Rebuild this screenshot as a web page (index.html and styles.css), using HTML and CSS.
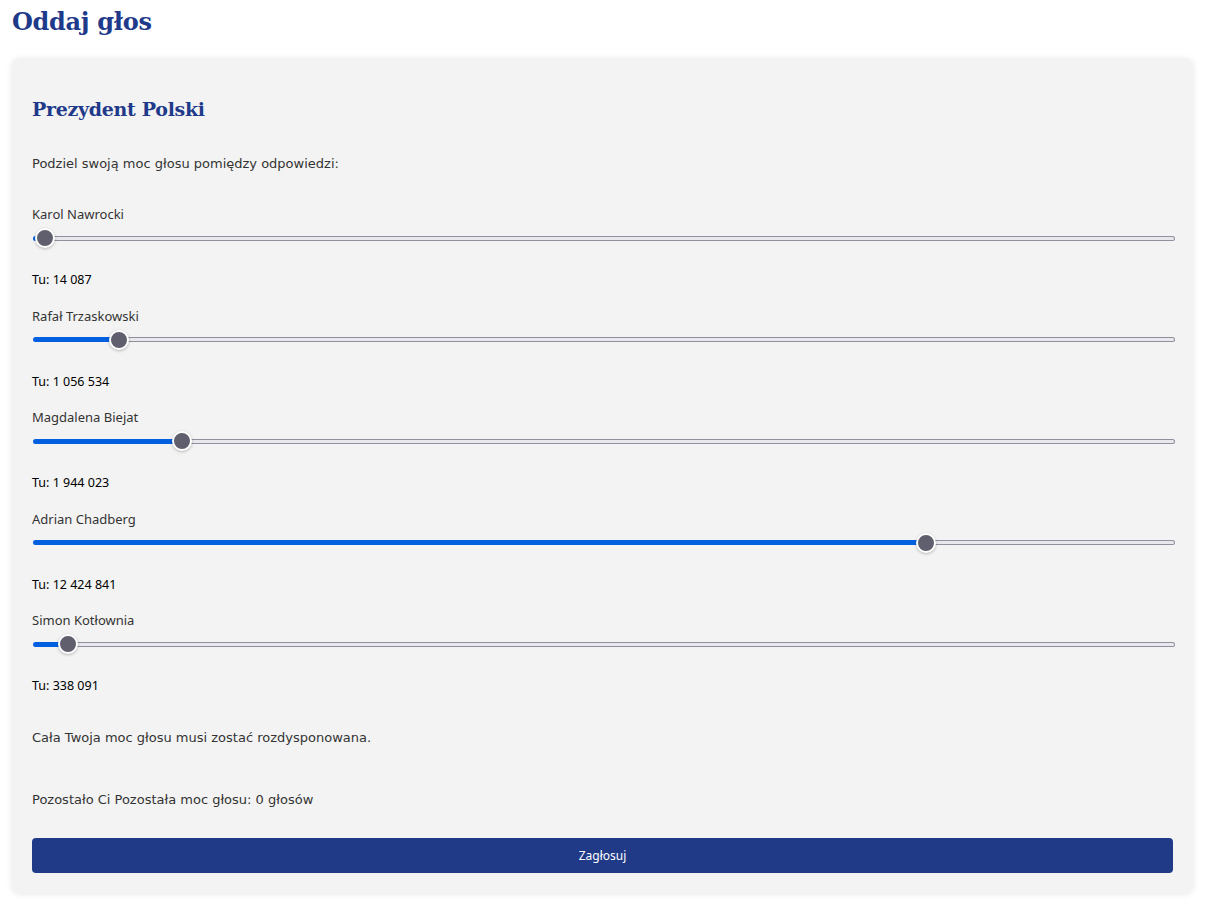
FILE: index.html
```html
<!DOCTYPE html>
<html lang="pl">
<head>
<meta charset="utf-8">
<title>Oddaj głos</title>
<link rel="stylesheet" href="styles.css">
</head>
<body>
<h1 class="page-title">Oddaj głos</h1>
<section class="card">
  <h2 class="question">Prezydent Polski</h2>
  <p class="intro">Podziel swoją moc głosu pomiędzy odpowiedzi:</p>

  <div class="option">
    <label class="opt-label" for="o1">Karol Nawrocki</label>
    <input class="slider" id="o1" type="range" min="0" max="15777576" value="14087" style="--v:0.000893">
    <div class="tu">Tu: 14 087</div>
  </div>
  <div class="option">
    <label class="opt-label" for="o2">Rafał Trzaskowski</label>
    <input class="slider" id="o2" type="range" min="0" max="15777576" value="1056534" style="--v:0.06697">
    <div class="tu">Tu: 1 056 534</div>
  </div>
  <div class="option">
    <label class="opt-label" for="o3">Magdalena Biejat</label>
    <input class="slider" id="o3" type="range" min="0" max="15777576" value="1944023" style="--v:0.12322">
    <div class="tu">Tu: 1 944 023</div>
  </div>
  <div class="option">
    <label class="opt-label" for="o4">Adrian Chadberg</label>
    <input class="slider" id="o4" type="range" min="0" max="15777576" value="12424841" style="--v:0.78750">
    <div class="tu">Tu: 12 424 841</div>
  </div>
  <div class="option">
    <label class="opt-label" for="o5">Simon Kotłownia</label>
    <input class="slider" id="o5" type="range" min="0" max="15777576" value="338091" style="--v:0.02143">
    <div class="tu">Tu: 338 091</div>
  </div>

  <p class="note">Cała Twoja moc głosu musi zostać rozdysponowana.</p>
  <p class="remaining">Pozostało Ci Pozostała moc głosu: 0 głosów</p>
  <button class="submit" type="button">Zagłosuj</button>
</section>
</body>
</html>
```

FILE: styles.css
```css
* { box-sizing: border-box; }

body {
  margin: 0;
  padding: 0 13px 8px 12px;
  background: #ffffff;
  font-family: "Noto Sans", sans-serif;
}

.page-title {
  margin: 5px 0 0;
  font-family: "DejaVu Serif", Georgia, serif;
  font-weight: bold;
  font-size: 24px;
  line-height: 34px;
  color: #1f3a8a;
  letter-spacing: -0.3px;
}

.card {
  margin-top: 19px;
  background: #f3f3f3;
  border-radius: 8px;
  box-shadow: 0 1px 6px rgba(0, 0, 0, 0.1);
  padding: 20px;
}

.question {
  margin: 18px 0 0;
  font-family: "DejaVu Serif", Georgia, serif;
  font-weight: bold;
  font-size: 19px;
  line-height: 26px;
  color: #1f3a8a;
  letter-spacing: -0.3px;
}

.intro {
  margin: 33px 0 0;
  font-family: "DejaVu Sans", Verdana, sans-serif;
  font-size: 13px;
  line-height: 18px;
  color: #333333;
}

.option {
  display: flex;
  flex-direction: column;
}

.option:first-of-type { margin-top: 32px; }

.opt-label {
  display: block;
  font-size: 13px;
  line-height: 18px;
  color: #333333;
}

.tu {
  margin-top: 24px;
  margin-bottom: 18.5px;
  font-size: 12.5px;
  line-height: 16px;
  color: #000000;
}

.slider {
  -webkit-appearance: none;
  appearance: none;
  display: block;
  width: calc(100% + 1px);
  height: 20px;
  margin: 5px 0 0 1px;
  padding: 0;
  background: transparent;
}

.slider::-webkit-slider-runnable-track {
  height: 5px;
  border: 1px solid transparent;
  border-radius: 3px;
  background:
    linear-gradient(#0060df, #0060df) 0 0 / calc(10px + (100% - 20px) * var(--v)) 100% no-repeat border-box,
    linear-gradient(#e9e9ed, #e9e9ed) padding-box,
    linear-gradient(#8f8f9d, #8f8f9d) border-box;
}

.slider::-webkit-slider-thumb {
  -webkit-appearance: none;
  appearance: none;
  width: 20px;
  height: 20px;
  margin-top: -8.5px;
  border-radius: 50%;
  background: #5f5f6d;
  border: 2px solid #ffffff;
  box-shadow: 0 1px 3px rgba(0, 0, 0, 0.25);
}

.note {
  margin: 16px 0 0;
  font-family: "DejaVu Sans", Verdana, sans-serif;
  font-size: 13px;
  line-height: 18px;
  color: #333333;
}

.remaining {
  margin: 44px 0 0;
  font-family: "DejaVu Sans", Verdana, sans-serif;
  font-size: 13px;
  line-height: 18px;
  color: #333333;
}

.submit {
  display: block;
  width: 100%;
  height: 35px;
  margin-top: 29px;
  border: none;
  border-radius: 4px;
  background: #203a88;
  color: #ffffff;
  font-family: "Noto Sans", sans-serif;
  font-size: 12px;
}
```
